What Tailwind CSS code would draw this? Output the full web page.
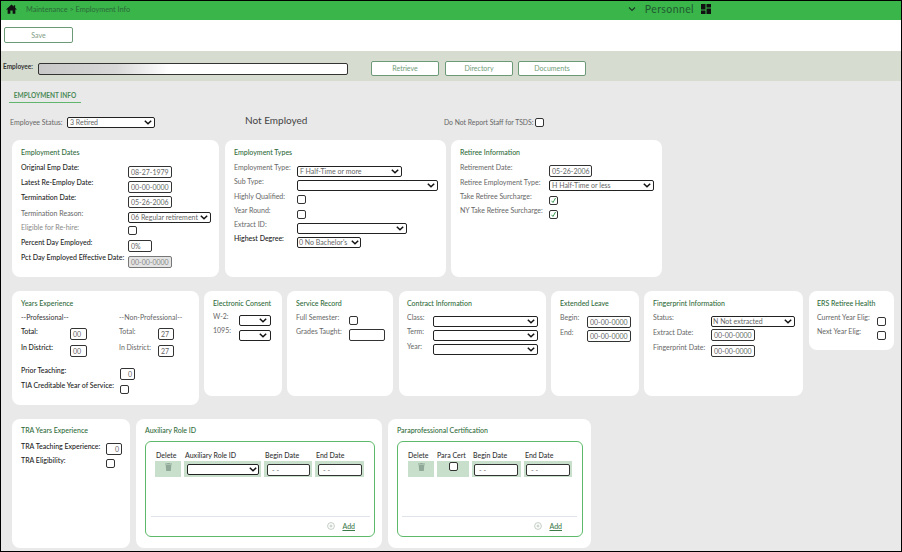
<!DOCTYPE html>
<html><head><meta charset="utf-8"><title>Employment Info</title>
<script src="https://cdn.jsdelivr.net/npm/@tailwindcss/browser@4"></script></head>
<body class="m-0">
<div class="w-[902px] h-[552px] overflow-hidden border border-black bg-[#e9e9e9] [font-family:Lato,sans-serif] text-[7px] leading-[9px] text-[#666]">
  <!-- top bar -->
  <header class="h-[19px] bg-[#3ab54a] flex items-center pl-[5px] pb-[3px] text-[#2a6a38]">
    <svg width="11" height="10" viewBox="0 0 24 22" class="mr-[9px]"><path fill="#111" d="M12 1 0 12h3.5v9.5h6v-7h5v7h6V12H24L20 8.4V2.5h-3v3.1z"/></svg>
    <span class="text-[7.3px]">Maintenance &gt; Employment Info</span>
    <div class="ml-auto flex items-center mr-[190px]">
      <svg width="8" height="6" viewBox="0 0 8 6" class="mr-[9px]"><path d="M1 1.5 4 4.5 7 1.5" fill="none" stroke="#1c3d25" stroke-width="1.2"/></svg>
      <span class="text-[10.5px] leading-[12px] text-[#1f5a30] tracking-[0.4px] mr-[7px]">Personnel</span>
      <svg width="10" height="10" viewBox="0 0 10 10"><path fill="#111" d="M0 0h4.5v5.5H0zM5.5 0H10v3.5H5.5zM5.5 4.5H10V10H5.5zM0 6.5h4.5V10H0z"/></svg>
    </div>
  </header>
  <!-- save bar -->
  <div class="h-[31px] bg-white pl-[3px] pt-[7px]">
    <button class="w-[69px] h-[16px] border-[1.5px] border-[#6d9a76] rounded-[2px] bg-white text-[#7f9c85] text-[7px]">Save</button>
  </div>
  <!-- employee bar -->
  <div class="h-[30px] bg-[#d6dcd0] flex items-start pl-[2px]">
    <span class="w-[35px] mt-[11px] font-bold text-[#333] text-[6.5px]">Employee:</span>
    <div class="w-[310px] h-[12px] mt-[12px] border border-[#333] rounded-[2px] bg-[linear-gradient(90deg,#c8c8c8_0%,#d8d8d8_25%,#fff_42%)]"></div>
    <div class="flex ml-[23px] mt-[10px]">
      <button class="w-[68px] h-[15px] border-[1.5px] border-[#6d9a76] rounded-[2px] bg-white text-[#6f9c78] text-[7px]">Retrieve</button>
      <button class="w-[68px] h-[15px] ml-[6px] border-[1.5px] border-[#6d9a76] rounded-[2px] bg-white text-[#6f9c78] text-[7px]">Directory</button>
      <button class="w-[68px] h-[15px] ml-[5px] border-[1.5px] border-[#6d9a76] rounded-[2px] bg-white text-[#6f9c78] text-[7px]">Documents</button>
    </div>
  </div>
  <!-- tab -->
  <div class="ml-[8px] mt-[9px] w-[72px] h-[13px] pt-[1px] border-b-[1.5px] border-[#5fb56b] text-center text-[#4b8a58] font-bold text-[6.5px] leading-[10px]">EMPLOYMENT INFO</div>
  <!-- status -->
  <div class="h-[12px] mt-[13px] flex items-center pl-[9px]">
    <span class="w-[57px]">Employee Status:</span>
    <div class="w-[88px] h-[11px] border border-[#222] rounded-[2px] bg-white flex items-center justify-between px-[2px]"><span>3 Retired</span><svg width="8" height="5" viewBox="0 0 8 5"><path d="M.8.8 4 3.8 7.2.8" fill="none" stroke="#111" stroke-width="1.5"/></svg></div>
    <span class="ml-[90px] w-[199px] mb-[3px] text-[10px] text-[#444]">Not Employed</span>
    <span class="w-[91px] whitespace-nowrap text-[6.8px]">Do Not Report Staff for TSDS:</span>
    <div class="w-[9px] h-[9px] border border-[#333] rounded-[2px] bg-white"></div>
  </div>

  <!-- row 1 -->
  <div class="flex mt-[12px] ml-[11px] gap-[6px]">
    <section class="w-[207px] h-[137px] bg-white rounded-[8px] pl-[9px] pt-[8px]">
      <h2 class="text-[#2f6b3a] font-medium mb-[6px]">Employment Dates</h2>
      <div class="flex h-[15px]"><span class="w-[107px] text-[#222] font-medium">Original Emp Date:</span><div class="w-[44px] h-[12px] mt-[3px] border border-[#333] rounded-[2px] bg-white px-[2px] leading-[10px]">08-27-1979</div></div>
      <div class="flex h-[15px]"><span class="w-[107px] text-[#222] font-medium">Latest Re-Employ Date:</span><div class="w-[44px] h-[12px] mt-[3px] border border-[#333] rounded-[2px] bg-white px-[2px] leading-[10px]">00-00-0000</div></div>
      <div class="flex h-[16px]"><span class="w-[107px] text-[#222] font-medium">Termination Date:</span><div class="w-[44px] h-[12px] mt-[3px] border border-[#333] rounded-[2px] bg-white px-[2px] leading-[10px]">05-26-2006</div></div>
      <div class="flex h-[14px]"><span class="w-[107px]">Termination Reason:</span><div class="w-[83px] h-[11px] mt-[3px] border border-[#222] rounded-[2px] bg-white flex items-center justify-between px-[2px]"><span class="whitespace-nowrap">06 Regular retirement</span><svg width="8" height="5" viewBox="0 0 8 5"><path d="M.8.8 4 3.8 7.2.8" fill="none" stroke="#111" stroke-width="1.5"/></svg></div></div>
      <div class="flex h-[15px]"><span class="w-[107px] text-[#888]">Eligible for Re-hire:</span><div class="w-[9px] h-[9px] mt-[3px] border border-[#333] rounded-[2px] bg-white"></div></div>
      <div class="flex h-[15px]"><span class="w-[107px] text-[#222] font-medium">Percent Day Employed:</span><div class="w-[24px] h-[12px] mt-[2px] border border-[#333] rounded-[2px] bg-white px-[2px] leading-[10px]">0%</div></div>
      <div class="flex h-[15px]"><span class="w-[107px] text-[#222] font-medium whitespace-nowrap">Pct Day Employed Effective Date:</span><div class="w-[44px] h-[12px] mt-[3px] border border-[#777] rounded-[2px] bg-[#e4e4e4] px-[2px] leading-[10px] text-[#888]">00-00-0000</div></div>
    </section>
    <section class="w-[221px] h-[137px] bg-white rounded-[8px] pl-[9px] pt-[8px]">
      <h2 class="text-[#2f6b3a] font-medium mb-[6px]">Employment Types</h2>
      <div class="flex h-[14px]"><span class="w-[63px]">Employment Type:</span><div class="w-[105px] h-[11px] mt-[3px] border border-[#222] rounded-[2px] bg-white flex items-center justify-between px-[2px]"><span>F Half-Time or more</span><svg width="8" height="5" viewBox="0 0 8 5"><path d="M.8.8 4 3.8 7.2.8" fill="none" stroke="#111" stroke-width="1.5"/></svg></div></div>
      <div class="flex h-[15px]"><span class="w-[63px]">Sub Type:</span><div class="w-[141px] h-[11px] mt-[3px] border border-[#222] rounded-[2px] bg-white flex items-center justify-end px-[2px]"><svg width="8" height="5" viewBox="0 0 8 5"><path d="M.8.8 4 3.8 7.2.8" fill="none" stroke="#111" stroke-width="1.5"/></svg></div></div>
      <div class="flex h-[14px]"><span class="w-[63px]">Highly Qualified:</span><div class="w-[9px] h-[9px] mt-[3px] border border-[#333] rounded-[2px] bg-white"></div></div>
      <div class="flex h-[14px]"><span class="w-[63px]">Year Round:</span><div class="w-[9px] h-[9px] mt-[4px] border border-[#333] rounded-[2px] bg-white"></div></div>
      <div class="flex h-[14px]"><span class="w-[63px]">Extract ID:</span><div class="w-[110px] h-[11px] mt-[3px] border border-[#222] rounded-[2px] bg-white flex items-center justify-end px-[2px]"><svg width="8" height="5" viewBox="0 0 8 5"><path d="M.8.8 4 3.8 7.2.8" fill="none" stroke="#111" stroke-width="1.5"/></svg></div></div>
      <div class="flex h-[14px]"><span class="w-[63px] text-[#222] font-medium">Highest Degree:</span><div class="w-[64px] h-[11px] mt-[3px] border border-[#222] rounded-[2px] bg-white flex items-center justify-between px-[1px]"><span class="whitespace-nowrap">0 No Bachelor's</span><svg width="8" height="5" viewBox="0 0 8 5"><path d="M.8.8 4 3.8 7.2.8" fill="none" stroke="#111" stroke-width="1.5"/></svg></div></div>
    </section>
    <section class="w-[211px] h-[137px] ml-[-1px] bg-white rounded-[8px] pl-[9px] pt-[8px]">
      <h2 class="text-[#2f6b3a] font-medium mb-[6px]">Retiree Information</h2>
      <div class="flex h-[15px]"><span class="w-[89px]">Retirement Date:</span><div class="w-[43px] h-[12px] mt-[2px] border border-[#333] rounded-[2px] bg-white px-[2px] leading-[10px] whitespace-nowrap">05-26-2006</div></div>
      <div class="flex h-[14px]"><span class="w-[89px]">Retiree Employment Type:</span><div class="w-[105px] h-[11px] mt-[2px] border border-[#222] rounded-[2px] bg-white flex items-center justify-between px-[2px]"><span>H Half-Time or less</span><svg width="8" height="5" viewBox="0 0 8 5"><path d="M.8.8 4 3.8 7.2.8" fill="none" stroke="#111" stroke-width="1.5"/></svg></div></div>
      <div class="flex h-[14px]"><span class="w-[89px]">Take Retiree Surcharge:</span><div class="w-[9px] h-[9px] mt-[4px] border border-[#333] rounded-[2px] bg-white flex items-center justify-center"><svg width="7" height="7" viewBox="0 0 7 7"><path d="M1.5 3.8 3 5.5 5.5 1" fill="none" stroke="#3a9a50" stroke-width="1"/></svg></div></div>
      <div class="flex h-[14px]"><span class="w-[89px]">NY Take Retiree Surcharge:</span><div class="w-[9px] h-[9px] mt-[4px] border border-[#333] rounded-[2px] bg-white flex items-center justify-center"><svg width="7" height="7" viewBox="0 0 7 7"><path d="M1.5 3.8 3 5.5 5.5 1" fill="none" stroke="#3a9a50" stroke-width="1"/></svg></div></div>
    </section>
  </div>

  <!-- row 2 -->
  <div class="flex items-start mt-[14px] ml-[11px] gap-[5px]">
    <section class="w-[187px] h-[114px] bg-white rounded-[8px] pl-[9px] pt-[8px]">
      <h2 class="text-[#2f6b3a] font-medium mb-[5px]">Years Experience</h2>
      <div class="flex h-[12px] mb-[2px]"><span class="w-[98px] text-[#333]">--Professional--</span><span>--Non-Professional--</span></div>
      <div class="flex h-[16px]"><span class="w-[49px] text-[#222] font-medium">Total:</span><div class="w-[17px] h-[12px] mt-[1px] border border-[#333] rounded-[2px] bg-white pl-[2px] leading-[10px]">00</div><span class="ml-[32px] w-[39px]">Total:</span><div class="w-[16px] h-[12px] mt-[1px] border border-[#333] rounded-[2px] bg-white pl-[2px] leading-[10px]">27</div></div>
      <div class="flex h-[23px]"><span class="w-[49px] text-[#222] font-medium">In District:</span><div class="w-[17px] h-[12px] mt-[2px] border border-[#333] rounded-[2px] bg-white pl-[2px] leading-[10px]">00</div><span class="ml-[32px] w-[39px]">In District:</span><div class="w-[16px] h-[12px] mt-[2px] border border-[#333] rounded-[2px] bg-white pl-[2px] leading-[10px]">27</div></div>
      <div class="flex h-[15px]"><span class="w-[99px] text-[#222] font-medium">Prior Teaching:</span><div class="w-[15px] h-[12px] mt-[2px] border border-[#333] rounded-[2px] bg-white pr-[2px] text-right leading-[10px]">0</div></div>
      <div class="flex h-[15px]"><span class="w-[99px] text-[#222] font-medium whitespace-nowrap">TIA Creditable Year of Service:</span><div class="w-[9px] h-[9px] mt-[4px] border border-[#333] rounded-[2px] bg-white"></div></div>
    </section>
    <section class="w-[78px] h-[105px] bg-white rounded-[8px] pl-[9px] pt-[8px]">
      <h2 class="text-[#2f6b3a] font-medium mb-[4px] whitespace-nowrap">Electronic Consent</h2>
      <div class="flex h-[14px]"><span class="w-[26px]">W-2:</span><div class="w-[32px] h-[11px] mt-[3px] border border-[#222] rounded-[2px] bg-white flex items-center justify-end px-[3px]"><svg width="8" height="5" viewBox="0 0 8 5"><path d="M.8.8 4 3.8 7.2.8" fill="none" stroke="#111" stroke-width="1.5"/></svg></div></div>
      <div class="flex h-[15px]"><span class="w-[26px]">1095:</span><div class="w-[32px] h-[11px] mt-[4px] border border-[#222] rounded-[2px] bg-white flex items-center justify-end px-[3px]"><svg width="8" height="5" viewBox="0 0 8 5"><path d="M.8.8 4 3.8 7.2.8" fill="none" stroke="#111" stroke-width="1.5"/></svg></div></div>
    </section>
    <section class="w-[106px] h-[105px] bg-white rounded-[8px] pl-[9px] pt-[8px]">
      <h2 class="text-[#2f6b3a] font-medium mb-[5px]">Service Record</h2>
      <div class="flex h-[14px]"><span class="w-[53px]">Full Semester:</span><div class="w-[9px] h-[9px] mt-[3px] border border-[#333] rounded-[2px] bg-white"></div></div>
      <div class="flex h-[15px]"><span class="w-[53px]">Grades Taught:</span><div class="w-[36px] h-[12px] mt-[2px] border border-[#333] rounded-[2px] bg-white"></div></div>
    </section>
    <section class="w-[147px] ml-[1px] h-[105px] bg-white rounded-[8px] pl-[8px] pt-[8px]">
      <h2 class="text-[#2f6b3a] font-medium mb-[5px]">Contract Information</h2>
      <div class="flex h-[14px]"><span class="w-[26px]">Class:</span><div class="w-[105px] h-[11px] mt-[3px] border border-[#222] rounded-[2px] bg-white flex items-center justify-end px-[2px]"><svg width="8" height="5" viewBox="0 0 8 5"><path d="M.8.8 4 3.8 7.2.8" fill="none" stroke="#111" stroke-width="1.5"/></svg></div></div>
      <div class="flex h-[15px]"><span class="w-[26px]">Term:</span><div class="w-[105px] h-[11px] mt-[3px] border border-[#222] rounded-[2px] bg-white flex items-center justify-end px-[2px]"><svg width="8" height="5" viewBox="0 0 8 5"><path d="M.8.8 4 3.8 7.2.8" fill="none" stroke="#111" stroke-width="1.5"/></svg></div></div>
      <div class="flex h-[15px]"><span class="w-[26px]">Year:</span><div class="w-[105px] h-[11px] mt-[2px] border border-[#222] rounded-[2px] bg-white flex items-center justify-end px-[2px]"><svg width="8" height="5" viewBox="0 0 8 5"><path d="M.8.8 4 3.8 7.2.8" fill="none" stroke="#111" stroke-width="1.5"/></svg></div></div>
    </section>
    <section class="w-[88px] h-[105px] bg-white rounded-[8px] pl-[9px] pt-[8px]">
      <h2 class="text-[#2f6b3a] font-medium mb-[5px]">Extended Leave</h2>
      <div class="flex h-[15px]"><span class="w-[27px]">Begin:</span><div class="w-[44px] h-[12px] mt-[3px] border border-[#333] rounded-[2px] bg-white px-[2px] leading-[10px]">00-00-0000</div></div>
      <div class="flex h-[15px]"><span class="w-[27px]">End:</span><div class="w-[44px] h-[12px] mt-[2px] border border-[#333] rounded-[2px] bg-white px-[2px] leading-[10px]">00-00-0000</div></div>
    </section>
    <section class="w-[159px] h-[105px] bg-white rounded-[8px] pl-[9px] pt-[8px]">
      <h2 class="text-[#2f6b3a] font-medium mb-[5px]">Fingerprint Information</h2>
      <div class="flex h-[15px]"><span class="w-[58px]">Status:</span><div class="w-[84px] h-[11px] mt-[3px] border border-[#222] rounded-[2px] bg-white flex items-center justify-between px-[1px]"><span>N Not extracted</span><svg width="8" height="5" viewBox="0 0 8 5" class="mr-[1px]"><path d="M.8.8 4 3.8 7.2.8" fill="none" stroke="#111" stroke-width="1.5"/></svg></div></div>
      <div class="flex h-[15px]"><span class="w-[58px]">Extract Date:</span><div class="w-[44px] h-[12px] mt-[1px] border border-[#333] rounded-[2px] bg-white px-[2px] leading-[10px]">00-00-0000</div></div>
      <div class="flex h-[15px]"><span class="w-[58px]">Fingerprint Date:</span><div class="w-[44px] h-[12px] mt-[2px] border border-[#333] rounded-[2px] bg-white px-[2px] leading-[10px]">00-00-0000</div></div>
    </section>
    <section class="w-[85px] ml-[1px] h-[59px] bg-white rounded-[8px] pl-[8px] pt-[8px]">
      <h2 class="text-[#2f6b3a] font-medium mb-[5px]">ERS Retiree Health</h2>
      <div class="flex h-[14px]"><span class="w-[60px]">Current Year Elig:</span><div class="w-[9px] h-[9px] mt-[4px] border border-[#333] rounded-[2px] bg-white"></div></div>
      <div class="flex h-[14px]"><span class="w-[60px]">Next Year Elig:</span><div class="w-[9px] h-[9px] mt-[4px] border border-[#333] rounded-[2px] bg-white"></div></div>
    </section>
  </div>

  <!-- row 3 -->
  <div class="flex mt-[14px] ml-[11px] gap-[6px]">
    <section class="w-[118px] h-[129px] bg-white rounded-[8px] pl-[9px] pt-[7px]">
      <h2 class="text-[#2f6b3a] font-medium mb-[7px]">TRA Years Experience</h2>
      <div class="flex h-[14px]"><span class="w-[85px] text-[#222] font-medium whitespace-nowrap">TRA Teaching Experience:</span><div class="w-[16px] h-[12px] mt-[1px] border border-[#333] rounded-[2px] bg-white pr-[2px] text-right leading-[10px]">0</div></div>
      <div class="flex h-[15px]"><span class="w-[85px] text-[#222] font-medium">TRA Eligibility:</span><div class="w-[9px] h-[9px] mt-[3px] border border-[#333] rounded-[2px] bg-white"></div></div>
    </section>
    <section class="w-[246px] h-[129px] bg-white rounded-[8px] pl-[9px] pt-[7px]">
      <h2 class="text-[#2f6b3a] font-medium">Auxiliary Role ID</h2>
      <div class="w-[230px] h-[96px] mt-[6px] border border-[#5cba6a] rounded-[6px] pl-[9px] pt-[9px] flex flex-col">
        <div class="flex gap-[3px] text-[#333] font-medium h-[10px]"><span class="w-[26px] pl-[1px]">Delete</span><span class="w-[77px] pl-[1px]">Auxiliary Role ID</span><span class="w-[48px] pl-[1px]">Begin Date</span><span class="w-[49px] pl-[1px]">End Date</span></div>
        <div class="flex gap-[3px]">
          <div class="w-[26px] h-[16px] bg-[#c7dfcb] flex justify-center pt-[2px]"><svg width="7" height="8" viewBox="0 0 7 8"><path fill="#8fa898" d="M0 .6h7v1H0zM2.3 0h2.4v.6H2.3zM.7 2h5.6l-.5 6H1.2z"/></svg></div>
          <div class="w-[77px] h-[16px] bg-[#c7dfcb] pl-[3px] pt-[3px]"><div class="w-[72px] h-[11px] border border-[#222] rounded-[2px] bg-white flex items-center justify-end px-[1px]"><svg width="8" height="5" viewBox="0 0 8 5"><path d="M.8.8 4 3.8 7.2.8" fill="none" stroke="#111" stroke-width="1.5"/></svg></div></div>
          <div class="w-[48px] h-[16px] bg-[#c7dfcb] pl-[3px] pt-[3px]"><div class="w-[43px] h-[12px] border border-[#333] rounded-[2px] bg-white px-[4px] leading-[10px]">- -</div></div>
          <div class="w-[49px] h-[16px] bg-[#c7dfcb] pl-[3px] pt-[3px]"><div class="w-[44px] h-[12px] border border-[#333] rounded-[2px] bg-white px-[4px] leading-[10px]">- -</div></div>
        </div>
        <div class="mt-auto ml-[-4px] w-[219px] border-t border-[#dfe3ea] h-[20px] flex items-center justify-end pr-[15px] pb-[1px]">
          <svg width="8" height="8" viewBox="0 0 8 8" class="mr-[7px]"><circle cx="4" cy="4" r="3.4" fill="none" stroke="#aab8ae" stroke-width=".7"/><path d="M2.5 4h3M4 2.5v3" stroke="#aab8ae" stroke-width=".7"/></svg>
          <span class="underline text-[#3c7a4a] font-medium">Add</span>
        </div>
      </div>
    </section>
    <section class="w-[203px] h-[129px] bg-white rounded-[8px] pl-[9px] pt-[7px]">
      <h2 class="text-[#2f6b3a] font-medium">Paraprofessional Certification</h2>
      <div class="w-[186px] h-[96px] mt-[6px] border border-[#5cba6a] rounded-[6px] pl-[10px] pt-[9px] flex flex-col">
        <div class="flex gap-[3px] text-[#333] font-medium h-[10px]"><span class="w-[26px]">Delete</span><span class="w-[32px] whitespace-nowrap">Para Cert</span><span class="w-[49px] pl-[1px]">Begin Date</span><span class="w-[48px] pl-[1px]">End Date</span></div>
        <div class="flex gap-[3px]">
          <div class="w-[26px] h-[16px] bg-[#c7dfcb] flex justify-center pt-[2px]"><svg width="7" height="8" viewBox="0 0 7 8"><path fill="#8fa898" d="M0 .6h7v1H0zM2.3 0h2.4v.6H2.3zM.7 2h5.6l-.5 6H1.2z"/></svg></div>
          <div class="w-[32px] h-[16px] bg-[#c7dfcb] flex justify-center pt-[1px]"><div class="w-[9px] h-[9px] border border-[#333] rounded-[2px] bg-white"></div></div>
          <div class="w-[49px] h-[16px] bg-[#c7dfcb] pl-[2px] pt-[3px]"><div class="w-[44px] h-[12px] border border-[#333] rounded-[2px] bg-white px-[4px] leading-[10px]">- -</div></div>
          <div class="w-[48px] h-[16px] bg-[#c7dfcb] pl-[2px] pt-[3px]"><div class="w-[44px] h-[12px] border border-[#333] rounded-[2px] bg-white px-[4px] leading-[10px]">- -</div></div>
        </div>
        <div class="mt-auto ml-[-6px] w-[175px] border-t border-[#dfe3ea] h-[20px] flex items-center justify-end pr-[15px] pb-[1px]">
          <svg width="8" height="8" viewBox="0 0 8 8" class="mr-[7px]"><circle cx="4" cy="4" r="3.4" fill="none" stroke="#aab8ae" stroke-width=".7"/><path d="M2.5 4h3M4 2.5v3" stroke="#aab8ae" stroke-width=".7"/></svg>
          <span class="underline text-[#3c7a4a] font-medium">Add</span>
        </div>
      </div>
    </section>
  </div>
</div>
</body></html>
